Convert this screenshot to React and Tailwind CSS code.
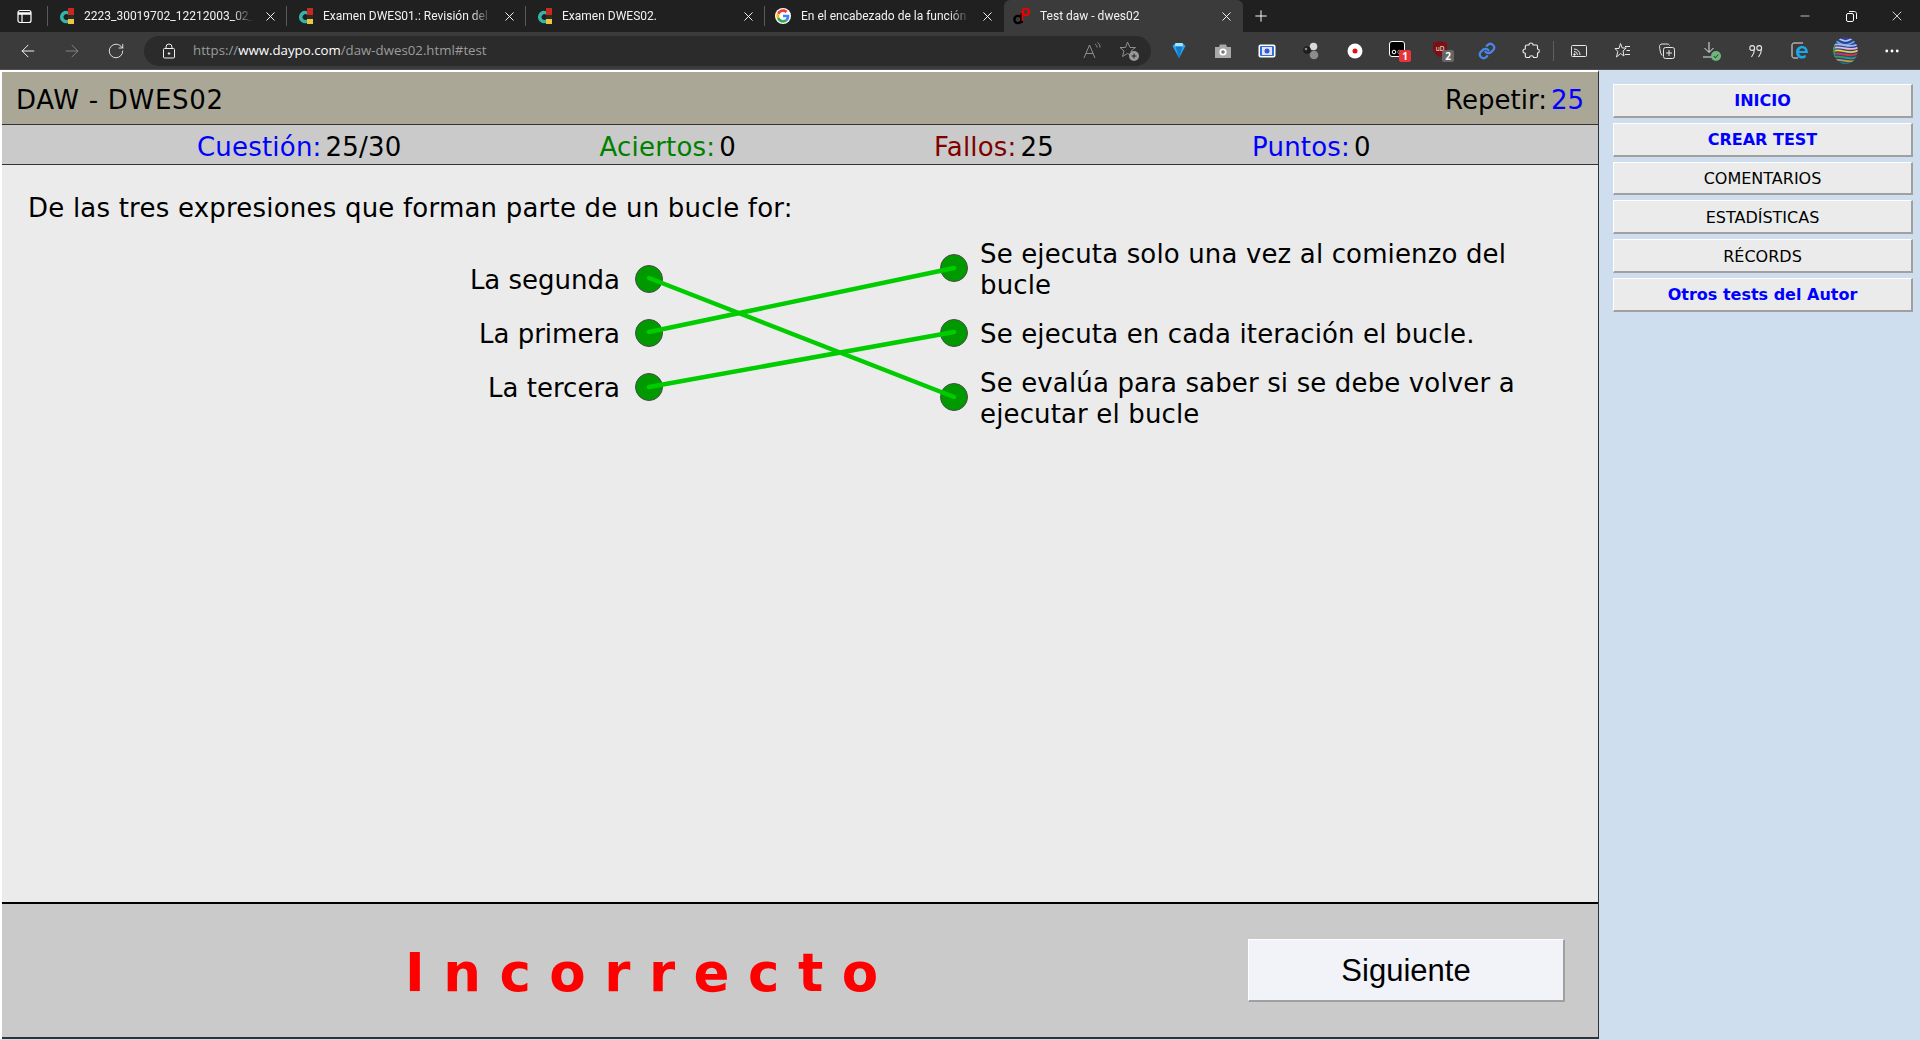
import React from "react";
import { ArrowLeft, ArrowRight, RotateCw, X, Plus, Minus, MoreHorizontal } from "lucide-react";

const TabFav = () => (
  <svg width="16" height="16" viewBox="0 0 16 16" className="shrink-0">
    <rect x="10" y="0" width="6" height="7" fill="#c8281e" />
    <rect x="10" y="11" width="6" height="5" fill="#e9c83a" />
    <path d="M10 3.200A6.200 6.200 0 1 0 10 15V11.500A2.900 2.900 0 1 1 10 6.600Z" fill="#35b5a8" />
    <rect x="10" y="7" width="6" height="4" fill="#2b2b2b" />
  </svg>
);

const GoogleFav = () => (
  <svg width="16" height="16" viewBox="0 0 48 48" className="shrink-0">
    <circle cx="24" cy="24" r="24" fill="#fff" />
    <path fill="#EA4335" d="M24 12c3 0 5.600 1 7.700 3l5.700-5.700C33.900 6 29.400 4 24 4 16.200 4 9.500 8.500 6.200 15l6.700 5.200C14.500 15.400 18.900 12 24 12z" />
    <path fill="#4285F4" d="M43 24.500c0-1.400-.1-2.700-.4-4H24v7.600h10.700c-.5 2.500-1.900 4.600-4 6l6.400 5c3.700-3.500 5.900-8.600 5.900-14.600z" />
    <path fill="#FBBC05" d="M12.900 28.800c-.4-1.200-.7-2.500-.7-3.800s.2-2.600.7-3.800L6.200 15C4.800 17.700 4 20.800 4 24s.8 6.300 2.200 9z" />
    <path fill="#34A853" d="M24 44c5.400 0 9.900-1.800 13.100-4.900l-6.400-5c-1.800 1.200-4 1.900-6.700 1.900-5.100 0-9.500-3.400-11.100-8.200L6.200 33C9.500 39.500 16.200 44 24 44z" />
  </svg>
);

const DaypoFav = () => (
  <svg width="18" height="18" viewBox="0 0 18 18" className="shrink-0">
    <circle cx="5" cy="12.500" r="3.600" fill="none" stroke="#000" strokeWidth="2.400" />
    <path d="M8.800 16V6" stroke="#000" strokeWidth="2.400" />
    <circle cx="12.800" cy="4.800" r="3.300" fill="none" stroke="#e00" strokeWidth="2.200" />
    <path d="M9.400 5V14" stroke="#e00" strokeWidth="1.600" />
  </svg>
);

const Tab = ({ fav, title, active, sep }) => (
  <div className={"relative flex h-8 w-[239px] items-center pl-[10px] pr-[9px] " + (active ? "rounded-t-md bg-[#3b3b3b]" : "")}>
    <div className="flex w-[16px] justify-center">{fav}</div>
    <div className="ml-[10px] min-w-0 flex-1 whitespace-nowrap font-['Roboto',sans-serif] text-[12px] leading-[16px] text-[#f2f2f2] [mask-image:linear-gradient(to_right,black_85%,transparent_97%)]">{title}</div>
    <X size={15} strokeWidth={1.5} className="ml-[5px] shrink-0 text-white" />
    {sep && <div className="absolute right-0 top-[6px] h-[20px] w-px bg-[#5a5a5a]" />}
  </div>
);

const Cell = ({ children, extra }) => <div className={"flex h-[38px] w-[44px] shrink-0 items-center justify-center " + (extra || "")}>{children}</div>;

const Ext = {
  diamond: (
    <svg width="14" height="17" viewBox="0 0 14 17">
      <path d="M0.500 4L3.500 1H10.500L13.500 4L7 16Z" fill="#29a8f0" />
      <path d="M3.500 1H10.500L11 4.500H3Z" fill="#a8e6ff" />
      <path d="M7 16L3.500 4.500H10.500Z" fill="#1579c8" />
    </svg>
  ),
  camera: (
    <svg width="18" height="16" viewBox="0 0 18 16">
      <path d="M1 4H5L6 1.500H12L13 4H17V15H1Z" fill="#a9a9a9" />
      <circle cx="9" cy="9" r="3.600" fill="#fff" />
      <circle cx="9" cy="9" r="1.800" fill="#777" />
    </svg>
  ),
  screen: (
    <svg width="18" height="14" viewBox="0 0 18 14">
      <rect x="0.500" y="0.500" width="17" height="13" rx="2" fill="#fff" />
      <rect x="2" y="2" width="14" height="10" rx="1" fill="#2b6fe0" />
      <rect x="4" y="3" width="10" height="8" fill="#dfe6f8" />
      <circle cx="9" cy="7" r="2.500" fill="#3f54c9" />
    </svg>
  ),
  balls: (
    <svg width="18" height="18" viewBox="0 0 18 18">
      <circle cx="11.500" cy="4.500" r="3.800" fill="#d8d8d8" />
      <circle cx="12" cy="13" r="4.300" fill="#8d8d8d" />
      <circle cx="5" cy="8" r="3.800" fill="#1d1d1d" />
      <circle cx="4" cy="7" r="1.300" fill="#8a8a8a" />
    </svg>
  ),
  rec: (
    <svg width="16" height="16" viewBox="0 0 16 16">
      <circle cx="8" cy="8" r="7.500" fill="#fff" />
      <circle cx="8" cy="8" r="2.500" fill="#e01010" />
    </svg>
  ),
  ob: (
    <div className="relative h-[20px] w-[20px]">
      <svg width="16" height="16" viewBox="0 0 16 16" className="absolute left-0 top-0">
        <rect x="0.500" y="0.500" width="15" height="15" rx="2.500" fill="#000" stroke="#fff" />
        <circle cx="5" cy="11" r="1.800" fill="none" stroke="#fff" />
        <circle cx="10.500" cy="11" r="1.800" fill="none" stroke="#888" />
      </svg>
      <div className="absolute left-[10px] top-[9px] flex h-[12px] w-[12px] items-center justify-center rounded-[2px] bg-[#e8333a] font-['Open_Sans',sans-serif] text-[10px] font-bold leading-none text-white">1</div>
    </div>
  ),
  ublock: (
    <div className="relative h-[20px] w-[20px]">
      <svg width="14" height="16" viewBox="0 0 14 16" className="absolute left-0 top-0">
        <path d="M7 0L14 2V8C14 12 10 15 7 16C4 15 0 12 0 8V2Z" fill="#7b1010" />
        <text x="7" y="10" textAnchor="middle" fontSize="6.500" fill="#fff" fontFamily="Open Sans">uD</text>
      </svg>
      <div className="absolute left-[9px] top-[9px] flex h-[12px] w-[12px] items-center justify-center rounded-[2px] bg-[#666] font-['Open_Sans',sans-serif] text-[10px] font-bold leading-none text-white">2</div>
    </div>
  ),
  link: (
    <svg width="18" height="18" viewBox="0 0 24 24" fill="none" stroke="#4a86e8" strokeWidth="3" strokeLinecap="round" strokeLinejoin="round">
      <path d="M10 13a5 5 0 0 0 7.500.5l3-3a5 5 0 0 0-7-7l-1.700 1.700" />
      <path d="M14 11a5 5 0 0 0-7.500-.5l-3 3a5 5 0 0 0 7 7l1.700-1.700" />
    </svg>
  ),
};

const PuzzleIcon = () => (
  <svg width="18" height="18" viewBox="0 0 18 18" fill="none" stroke="#f0f0f0" strokeWidth="1.100" strokeLinejoin="round">
    <path d="M7 3C7 1.700 8 1 9 1C10.200 1 11 1.900 11 3H14.500C15.300 3 15.500 3.600 15.500 4.200V7C16.500 7 17.300 7.900 17.300 9C17.300 10.100 16.500 11 15.500 11V14C15.500 15 14.800 15.500 14 15.500H11.500C11.500 14.500 10.500 13.800 9.500 13.800C8.300 13.800 7.500 14.600 7.500 15.500H5C4 15.500 3.300 14.800 3.300 14V11.200C2 11.200 1 10.300 1 9C1 7.800 2 7 3.300 7V4.500C3.300 3.600 4 3 5 3Z" />
  </svg>
);
const Cast = () => (
  <svg width="16" height="14" viewBox="0 0 16 14" fill="none" stroke="#e8e8e8" strokeWidth="1">
    <rect x="0.500" y="1.500" width="15" height="11" rx="1" />
    <path d="M3 7.500a3.500 3.500 0 0 1 3.500 3.500M3 5a6 6 0 0 1 6 6" />
    <circle cx="3.500" cy="10.500" r="0.800" fill="#e8e8e8" />
  </svg>
);
const FavList = () => (
  <svg width="18" height="18" viewBox="0 0 18 18" fill="none" stroke="#e8e8e8" strokeWidth="1">
    <path d="M6.500 1.500L8.200 6H12.200L9 9L10 14L6.500 11.500L2.500 15L3.800 9.500L1 6.500H5Z" />
    <path d="M11 4.500H16M12.500 8.500H16M11 12.500H16" />
  </svg>
);
const Collections = () => (
  <svg width="18" height="18" viewBox="0 0 18 18" fill="none" stroke="#e8e8e8" strokeWidth="1">
    <path d="M4 13.500C2.500 12 1.500 6 1.500 4.500C1.500 3 2.500 2 4 2H9C10.500 2 11 2.500 11.500 3.500" />
    <rect x="5.500" y="5.500" width="11" height="11" rx="2" />
    <path d="M11 8V14M8 11H14" />
  </svg>
);
const Download = () => (
  <div className="relative h-[20px] w-[20px]">
    <svg width="14" height="18" viewBox="0 0 14 18" fill="none" stroke="#e8e8e8" strokeWidth="1" className="absolute left-0 top-0">
      <path d="M7 1V11M2.500 7L7 11.500L11.500 7M1 16H12" />
    </svg>
    <svg width="10" height="10" viewBox="0 0 10 10" className="absolute left-[9px] top-[10px]">
      <circle cx="5" cy="5" r="5" fill="#6eb57e" />
      <path d="M2.800 5.200L4.400 6.800L7.300 3.500" stroke="#2f5b3a" strokeWidth="1.100" fill="none" />
    </svg>
  </div>
);
const Quote = () => (
  <svg width="14" height="14" viewBox="0 0 14 14" fill="none" stroke="#e8e8e8" strokeWidth="1.100">
    <circle cx="3.200" cy="4" r="2.400" />
    <path d="M5.600 4C5.600 8 4 11 2.500 13" />
    <circle cx="10.200" cy="4" r="2.400" />
    <path d="M12.600 4C12.600 8 11 11 9.500 13" />
  </svg>
);
const EdgeIe = () => (
  <div className="relative h-[18px] w-[18px]">
    <svg width="18" height="18" viewBox="0 0 18 18" fill="none" stroke="#e8e8e8" strokeWidth="1" className="absolute left-0 top-0">
      <path d="M7 16H3C1.800 16 1 15 1 14V3C1 1.800 1.800 1 3 1H12" />
    </svg>
    <svg width="14" height="14" viewBox="0 0 14 14" className="absolute left-[4px] top-[3px]">
      <path d="M1 7C1 3.500 3.500 1 7 1C10.500 1 13 3.500 13 8H4.200C4.300 9.800 5.600 11 7.300 11C8.600 11 9.700 10.500 10.700 9.800V12.400C9.600 13.200 8.400 13.500 7 13.500C3.500 13.500 1 10.800 1 7ZM4.300 6H10C9.900 4.400 8.800 3.300 7.200 3.300C5.700 3.300 4.600 4.400 4.300 6Z" fill="#1ea7e8" />
    </svg>
  </div>
);
const Profile = () => (
  <svg width="25" height="27" viewBox="0 0 24 26">
    <defs>
      <clipPath id="pf"><ellipse cx="12" cy="13" rx="11.800" ry="12.800" /></clipPath>
    </defs>
    <g clipPath="url(#pf)" fill="none" strokeWidth="1.700">
      <rect width="24" height="26" fill="#2f3f96" />
      <path d="M4 0C9 5 15 5 20 0" stroke="#b7c4f0" />
      <path d="M2 3C9 9 15 9 22 3" stroke="#5fb0d8" />
      <path d="M0 8C6 4 16 12 24 7" stroke="#9fbce8" />
      <path d="M0 11C6 7 16 15 24 10" stroke="#ecb6d8" />
      <path d="M0 14C6 10 16 18 24 13" stroke="#e6d81c" />
      <path d="M0 17C6 13 16 21 24 16" stroke="#d9363a" />
      <path d="M0 20C6 16 16 24 24 19" stroke="#2e9f57" />
      <path d="M0 23C6 19 16 27 24 22" stroke="#b9a42a" />
      <path d="M0 26C6 22 16 30 24 25" stroke="#1c8a7a" />
      <path d="M0 4V22" stroke="#2f9f4f" strokeWidth="4" />
    </g>
  </svg>
);

const NavBtn = ({ children, blue, bold }) => (
  <button className={"flex h-[33.8px] w-[300px] shrink-0 items-center justify-center border border-b-2 border-r-2 border-b-[#a0a0a0] border-l-white border-r-[#a0a0a0] border-t-white bg-[#ebebeb] pt-[2px] text-[16px] leading-none " + (blue ? "text-[#0000ff] " : "text-black ") + (bold ? "font-bold" : "")}>
    {children}
  </button>
);

const Dot = () => <div className="h-[28px] w-[28px] shrink-0 rounded-full border-[1.5px] border-[#4b4b4b] bg-[#009900]" />;

const Left = ({ children }) => (
  <div className="flex h-[31px] items-center justify-end gap-[15px]">
    <span className="-mb-[2px] whitespace-nowrap pt-[2px]">{children}</span>
    <Dot />
  </div>
);
const Right = ({ children }) => (
  <div className="flex items-center gap-[12px]">
    <Dot />
    <span className="-mb-[2px] w-[570px] pt-[2px] tracking-[0.14px]">{children}</span>
  </div>
);

const Stat = ({ label, value, color }) => (
  <div className="-mb-[2px] flex gap-[4px] whitespace-nowrap pt-[2px] tracking-[0.2px]">
    <span className={color}>{label}</span>
    <span className="text-black">{value}</span>
  </div>
);

export default function App() {
  return (
    <div className="flex h-[1040px] w-[1920px] flex-col overflow-hidden bg-[#cfdeee] font-['DejaVu_Sans',sans-serif]">
      {/* tab strip */}
      <div className="flex h-8 shrink-0 items-center bg-[#202020] font-['Open_Sans',sans-serif]">
        <div className="relative flex h-8 w-[48px] items-center justify-center">
          <svg width="15" height="15" viewBox="0 0 15 15" fill="none" stroke="#fff" strokeWidth="1.200">
            <rect x="1" y="1.500" width="13" height="12" rx="2" />
            <path d="M1 4.500H14" strokeWidth="2.500" />
            <path d="M5 4.500V13.500" />
          </svg>
          <div className="absolute right-0 top-[6px] h-[20px] w-px bg-[#5a5a5a]" />
        </div>
        <Tab fav={<TabFav />} title="2223_30019702_12212003_02_E" sep />
        <Tab fav={<TabFav />} title="Examen DWES01.: Revisión del in" sep />
        <Tab fav={<TabFav />} title="Examen DWES02." sep />
        <Tab fav={<GoogleFav />} title="En el encabezado de la función s" />
        <Tab fav={<DaypoFav />} title="Test daw - dwes02" active />
        <div className="flex w-[36px] justify-center">
          <Plus size={18} strokeWidth={1.3} className="text-white" />
        </div>
        <div className="ml-auto flex items-center">
          <div className="flex w-[46px] justify-center"><Minus size={14} strokeWidth={1.2} className="text-white" /></div>
          <div className="flex w-[46px] justify-center">
            <svg width="11" height="11" viewBox="0 0 11 11" fill="none" stroke="#fff" strokeWidth="1">
              <rect x="0.500" y="2.500" width="7" height="8" rx="1.500" />
              <path d="M3 0.500H8.500C9.500 0.500 10.500 1.500 10.500 2.500V8" />
            </svg>
          </div>
          <div className="flex w-[46px] justify-center"><X size={16} strokeWidth={1.2} className="text-white" /></div>
        </div>
      </div>

      {/* toolbar */}
      <div className="flex h-[38px] shrink-0 items-center border-b border-b-[#4f4f4f] bg-[#3b3b3b] font-['Open_Sans',sans-serif]">
        <div className="flex h-full w-[144px] shrink-0 items-center pl-[6px]">
          <Cell><ArrowLeft size={20} strokeWidth={1.1} className="text-white" /></Cell>
          <Cell><ArrowRight size={20} strokeWidth={1.1} className="text-[#8a8a8a]" /></Cell>
          <Cell><RotateCw size={18} strokeWidth={1.1} className="text-white" /></Cell>
        </div>
        <div className="flex h-[30px] w-[1007px] shrink-0 items-center rounded-full bg-[#2b2b2b] pl-[19px] pr-[12px]">
          <svg width="12" height="16" viewBox="0 0 12 16" fill="none" stroke="#f0f0f0" strokeWidth="1" className="shrink-0">
            <rect x="0.500" y="5.500" width="11" height="9.500" rx="1" />
            <path d="M3 5.500V4a3 3 0 0 1 6 0V5.500" />
            <circle cx="6" cy="10.500" r="0.800" fill="#f0f0f0" />
          </svg>
          <div className="ml-[18px] flex-1 whitespace-nowrap text-[13.25px] leading-none text-[#9c9c9c]">
            https://<span className="text-white">www.daypo.com</span>/daw-dwes02.html#test
          </div>
          <svg width="20" height="18" viewBox="0 0 20 18" fill="none" stroke="#8f8f8f" strokeWidth="1" className="shrink-0">
            <path d="M2 16L7.500 3L13 16M4 11.500H11" />
            <path d="M13 2C14.500 3 15 4 15 5.500M15.500 0.500C17.500 2 18 3.500 18 5.500" />
          </svg>
          <div className="relative ml-[17px] h-[20px] w-[20px] shrink-0">
            <svg width="20" height="20" viewBox="0 0 20 20" fill="none" stroke="#8f8f8f" strokeWidth="1" className="absolute left-0 top-0">
              <path d="M8.500 1L11 6.500H16.500L12 10L14 15.500L8.500 12.500L3.500 15.500L5 10L1 6.500H6.500Z" />
            </svg>
            <svg width="10" height="10" viewBox="0 0 10 10" className="absolute left-[10px] top-[10px]">
              <circle cx="5" cy="5" r="5" fill="#9a9a9a" />
              <path d="M5 2.500V7.500M2.500 5H7.500" stroke="#222" strokeWidth="1" />
            </svg>
          </div>
        </div>
        <div className="ml-[6px] flex items-center">
          <Cell>{Ext.diamond}</Cell>
          <Cell>{Ext.camera}</Cell>
          <Cell>{Ext.screen}</Cell>
          <Cell>{Ext.balls}</Cell>
          <Cell>{Ext.rec}</Cell>
          <Cell>{Ext.ob}</Cell>
          <Cell>{Ext.ublock}</Cell>
          <Cell>{Ext.link}</Cell>
          <Cell><PuzzleIcon /></Cell>
          <div className="h-[20px] w-px bg-[#5f5f5f]" />
          <Cell extra="ml-[3px]"><Cast /></Cell>
          <Cell><FavList /></Cell>
          <Cell><Collections /></Cell>
          <Cell extra="ml-[1px]"><Download /></Cell>
          <Cell><Quote /></Cell>
          <Cell><EdgeIe /></Cell>
          <Cell extra="ml-[1px]"><Profile /></Cell>
          <Cell extra="ml-[3px]"><MoreHorizontal size={18} strokeWidth={1.8} className="text-white" /></Cell>
        </div>
      </div>

      {/* page */}
      <div className="flex flex-1">
        <main className="flex h-[969px] w-[1599px] shrink-0 flex-col border-r border-l-2 border-t-2 border-l-white border-r-[#333333] border-t-white">
          <div className="flex h-[53px] shrink-0 items-center justify-between border-b border-b-[#333333] bg-[#aba797] pl-[14px] pr-[14px] text-[26px] leading-none text-black">
            <span className="-mb-[2px] pt-[2px] tracking-[0.7px]">DAW - DWES02</span>
            <div className="-mb-[2px] flex gap-[4px] pt-[2px]">
              <span>Repetir:</span>
              <span className="text-[#0000ff]">25</span>
            </div>
          </div>
          <div className="flex h-[40px] shrink-0 items-center gap-[198px] border-b border-b-[#333333] bg-[#cacaca] pl-[195px] text-[26px] leading-none">
            <Stat label="Cuestión:" value="25/30" color="text-[#0000ff]" />
            <Stat label="Aciertos:" value="0" color="text-[#008000]" />
            <Stat label="Fallos:" value="25" color="text-[#800000]" />
            <Stat label="Puntos:" value="0" color="text-[#0000ff]" />
          </div>
          <div className="flex-1 bg-[#ebebeb] text-[26px] leading-[31px] text-black">
            <p className="pl-[26px] pt-[28px] tracking-[0.21px]">De las tres expresiones que forman parte de un bucle for:</p>
            <div className="mt-[13px] flex items-center pl-[300px]">
              <div className="flex w-[361px] flex-col gap-[23px]">
                <Left>La segunda</Left>
                <Left>La primera</Left>
                <Left>La tercera</Left>
              </div>
              <div className="relative z-10 h-[191px] w-[277px] shrink-0">
                <svg width="277" height="191" viewBox="0 0 277 191" className="absolute left-0 top-0 overflow-visible">
                  <g stroke="#00cc00" strokeWidth="4.500" strokeLinecap="round">
                    <line x1="-14" y1="41" x2="291" y2="160" />
                    <line x1="-14" y1="95" x2="291" y2="31" />
                    <line x1="-14" y1="150" x2="291" y2="95" />
                  </g>
                </svg>
              </div>
              <div className="flex flex-col gap-[18px]">
                <Right>Se ejecuta solo una vez al comienzo del bucle</Right>
                <Right>Se ejecuta en cada iteración el bucle.</Right>
                <Right>Se evalúa para saber si se debe volver a ejecutar el bucle</Right>
              </div>
            </div>
          </div>
          <div className="flex h-[137px] shrink-0 items-center border-b-2 border-t-2 border-b-[#333333] border-t-black bg-[#cacaca]">
            <div className="ml-[403px] whitespace-nowrap pt-[4px] text-[53px] font-bold leading-none tracking-[18.5px] text-[#ff0000]">Incorrecto</div>
            <button className="ml-auto mr-[33px] flex h-[63px] w-[317px] items-center justify-center border border-b-2 border-r-2 border-b-[#a0a0a0] border-l-white border-r-[#a0a0a0] border-t-white bg-[#f1f3f8] font-['Liberation_Sans',sans-serif] text-[31px] leading-none text-black">
              Siguiente
            </button>
          </div>
        </main>
        <aside className="flex flex-1 flex-col gap-[5px] pl-[14px] pt-[14px]">
          <NavBtn blue bold>INICIO</NavBtn>
          <NavBtn blue bold>CREAR TEST</NavBtn>
          <NavBtn>COMENTARIOS</NavBtn>
          <NavBtn>ESTADÍSTICAS</NavBtn>
          <NavBtn>RÉCORDS</NavBtn>
          <NavBtn blue bold>Otros tests del Autor</NavBtn>
        </aside>
      </div>
    </div>
  );
}
